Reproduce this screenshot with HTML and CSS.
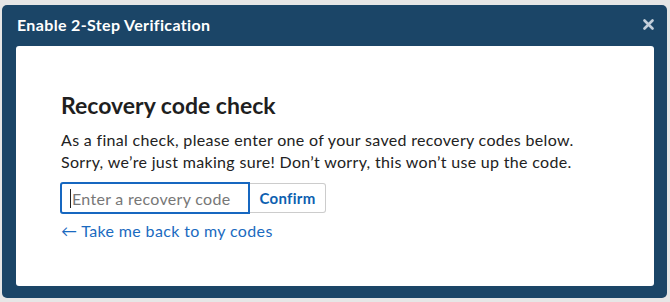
FILE: index.html
```html
<!DOCTYPE html>
<html lang="en">
<head>
<meta charset="utf-8">
<title>Enable 2-Step Verification</title>
<link rel="stylesheet" href="styles.css">
</head>
<body>
<div class="dialog">
  <div class="dialog-header">
    <span class="dialog-title">Enable 2-Step Verification</span>
    <button class="close" aria-label="Close">
      <svg width="11" height="11" viewBox="0 0 11 11"><path d="M1.5 1.5 L9.5 9.5 M9.5 1.5 L1.5 9.5" stroke="#c3ceda" stroke-width="2.6" stroke-linecap="round"/></svg>
    </button>
  </div>
  <div class="panel">
    <h2 class="heading">Recovery code check</h2>
    <p class="text">As a final check, please enter one of your saved recovery codes below.<br>Sorry, we’re just making sure! Don’t worry, this won’t use up the code.</p>
    <div class="field">
      <div class="input"><span class="caret"></span><span class="placeholder">Enter a recovery code</span></div>
      <button class="confirm">Confirm</button>
    </div>
    <a class="back" href="#">← Take me back to my codes</a>
  </div>
</div>
</body>
</html>
```
FILE: styles.css
```css
html, body {
  margin: 0;
  padding: 0;
}
body {
  background: #e6e6e6;
  font-family: "Lato", "Noto Sans", sans-serif;
  width: 670px;
  height: 302px;
  overflow: hidden;
}
.dialog {
  margin: 5px 0 0 2px;
  width: 665px;
  height: 293px;
  box-sizing: border-box;
  background: #1b4567;
  border-radius: 5px;
  padding: 0 13px 12px 14px;
  display: flex;
  flex-direction: column;
}
.dialog-header {
  height: 41px;
  display: flex;
  align-items: center;
  justify-content: space-between;
  padding-left: 1px;
  box-sizing: border-box;
}
.dialog-title {
  color: #ffffff;
  font-weight: 700;
  font-size: 16px;
  letter-spacing: 0.35px;
  margin-top: -2px;
}
.close {
  background: none;
  border: 0;
  padding: 0;
  margin: -2px 0 0 0;
  width: 11px;
  height: 11px;
  display: flex;
}
.panel {
  flex: 1;
  background: #ffffff;
  border-radius: 3px;
  padding: 45px 0 0 45px;
  box-sizing: border-box;
}
.heading {
  margin: 0;
  font-size: 23px;
  line-height: 28px;
  font-weight: 700;
  color: #1f1f1f;
}
.text {
  margin: 10px 0 0 0;
  font-size: 16px;
  line-height: 22px;
  letter-spacing: 0.32px;
  color: #222222;
}
.field {
  display: flex;
  margin-top: 9px;
  height: 32px;
}
.input {
  width: 190px;
  box-sizing: border-box;
  border: 2px solid #1667c0;
  border-radius: 3px 0 0 3px;
  display: flex;
  align-items: center;
  padding-left: 8px;
  margin-left: -1px;
}
.caret {
  width: 1px;
  height: 19px;
  background: #222;
  margin-right: 1px;
}
.placeholder {
  color: #777777;
  font-size: 16px;
  letter-spacing: 0.3px;
}
.confirm {
  width: 76px;
  height: 30px;
  margin-top: 1px;
  box-sizing: border-box;
  border: 1px solid #cccccc;
  border-left: 0;
  border-radius: 0 3px 3px 0;
  background: #ffffff;
  color: #0d5fb0;
  font-family: inherit;
  font-weight: 700;
  font-size: 15px;
  letter-spacing: 0.3px;
  padding: 0;
}
.back {
  display: block;
  margin-top: 7px;
  color: #1a6ac0;
  font-size: 16px;
  line-height: 20px;
  letter-spacing: 0.35px;
  text-decoration: none;
}
```
